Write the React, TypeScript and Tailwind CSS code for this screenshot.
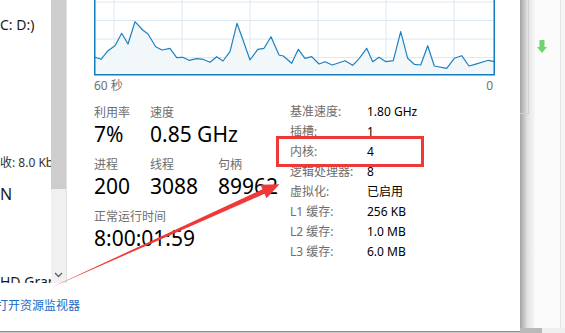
const points: [number, number][] = [
  [0.7, 57.3], [7, 59.3], [14, 50.7], [21, 45.7], [27.7, 33.3], [34, 44], [41, 21.7], [48.7, 30],
  [54, 34], [61.7, 46.7], [68, 50], [76, 48.3], [82.7, 57.7], [88.7, 57.3], [95, 60.3], [102.7, 58.7],
  [109, 59.3], [116, 62.3], [122.7, 56.7], [129, 61], [136, 51.7], [143, 23.3], [149, 40], [156, 60],
  [163.7, 49.3], [170, 48.3], [177, 36.7], [185, 55], [189.3, 56], [197.7, 63.3], [204.3, 49.3],
  [211, 58.3], [217.7, 56.7], [225, 64], [231, 61.7], [238.3, 65], [251, 60.7], [258.7, 65.3],
  [265.3, 58.3], [272.7, 48.3], [278.7, 61.7], [285, 57.3], [292, 61.7], [299.3, 60.7], [306.7, 31.7],
  [313.7, 58.3], [320.3, 64.3], [326.7, 65], [333.7, 45.7], [340.3, 66], [352.7, 68.3], [360.3, 58.3],
  [367.7, 55.7], [375, 66], [381, 64.3], [394.3, 60.3], [400.5, 61.7],
];

function CpuChart() {
  const line = points.map(([x, y]) => `${x},${y}`).join(' ');
  const area = `0.7,75 ${line} 400.5,75`;
  return (
    <svg width="401" height="76" viewBox="0 0 401 76" className="block">
      {[2, 20.5, 39, 57.5].map((y) => (
        <line key={y} x1="0" x2="401" y1={y} y2={y} stroke="#d9eaf5" strokeWidth="1" />
      ))}
      {[20, 88, 156, 224, 292, 360].map((x) => (
        <line key={x} x1={x} x2={x} y1="0" y2="75" stroke="#d9eaf5" strokeWidth="1" />
      ))}
      <polygon points={area} fill="#f1f6fa" fillOpacity="0.9" />
      <polyline points={line} fill="none" stroke="#1f80c0" strokeWidth="1.2" strokeLinejoin="round" />
      <path d="M0.75 0 V74.75 H400.25 V0" fill="none" stroke="#117dbb" strokeWidth="1.5" />
    </svg>
  );
}

function Stat({ label, value, width }: { label: string; value: string; width?: string }) {
  return (
    <div className={width}>
      <div className="h-4 text-[12px] leading-4 text-[#6d6d6d] whitespace-nowrap">{label}</div>
      <div className="h-[26px] text-[21px] leading-[26px] text-black whitespace-nowrap">{value}</div>
    </div>
  );
}

const details: [string, string][] = [
  ['基准速度:', '1.80 GHz'],
  ['插槽:', '1'],
  ['内核:', '4'],
  ['逻辑处理器:', '8'],
  ['虚拟化:', '已启用'],
  ['L1 缓存:', '256 KB'],
  ['L2 缓存:', '1.0 MB'],
  ['L3 缓存:', '6.0 MB'],
];

export default function App() {
  return (
    <div className="relative flex h-[333px] w-[565px] overflow-hidden bg-white font-['Noto_Sans','Noto_Sans_CJK_SC',sans-serif]">
      {/* left + main panel */}
      <div className="flex w-[520px] flex-col">
        <div className="flex h-[283px]">
          {/* sidebar list, clipped */}
          <div className="flex w-[51px] flex-col overflow-hidden pt-[15px] text-[#1a1a1a] whitespace-nowrap">
            <div className="h-5 text-[14px] leading-5">C: D:)</div>
            <div className="mt-[120px] h-4 text-[12px] leading-4 text-[#333]">收: 8.0 Kbps</div>
            <div className="mt-[13px] h-5 text-[16px] leading-5">N</div>
            <div className="mt-[68px] h-5 text-[14px] leading-5">HD Graphics</div>
          </div>

          {/* scrollbar */}
          <div className="flex w-[16px] flex-col border-r border-[#e2e2e2] bg-[#f0f0f0]">
            <div className="h-[189px] bg-[#cdcdcd]" />
            <div className="flex flex-1 items-end justify-center pb-[5px]">
              <svg width="9" height="6" viewBox="0 0 9 6">
                <path d="M1 1l3.5 3.5L8 1" fill="none" stroke="#606060" strokeWidth="1.3" />
              </svg>
            </div>
          </div>

          {/* performance panel */}
          <div className="flex flex-1 flex-col pl-[27px] pr-[25px]">
            <CpuChart />
            <div className="mt-[2px] flex h-4 justify-between text-[12px] leading-4 text-[#707070]">
              <span>60 秒</span>
              <span className="pr-[2px]">0</span>
            </div>

            <div className="mt-[8px] flex">
              <div className="flex w-[196px] flex-col gap-[10px] pt-[3px]">
                <div className="flex">
                  <Stat label="利用率" value="7%" width="w-[56px]" />
                  <Stat label="速度" value="0.85 GHz" />
                </div>
                <div className="flex">
                  <Stat label="进程" value="200" width="w-[56px]" />
                  <Stat label="线程" value="3088" width="w-[68px]" />
                  <Stat label="句柄" value="89962" />
                </div>
                <Stat label="正常运行时间" value="8:00:01:59" />
              </div>

              <div className="grid grid-cols-[77px_auto] text-[12px] leading-5">
                {details.map(([k, v]) => (
                  <div key={k} className="contents">
                    <span className="text-[#6d6d6d] whitespace-nowrap">{k}</span>
                    <span className="text-black whitespace-nowrap">{v}</span>
                  </div>
                ))}
              </div>
            </div>
          </div>
        </div>

        {/* footer link */}
        <div className="flex-1 pt-[15px]">
          <span className="ml-[-4px] block text-[12px] leading-4 text-[#1a6cc4] whitespace-nowrap">打开资源监视器</span>
        </div>
        <div className="h-[1px] bg-[#8e8e8e]" />
        <div className="h-[1px] bg-[#c4c4c4]" />
      </div>

      {/* window behind, on the right */}
      <div className="flex w-[45px] flex-col">
        <div className="flex flex-1">
          <div className="w-[15px] bg-linear-to-r from-[#a4a4a4] via-[#e2e2e2] to-[#f7f7f7]">
            <div className="h-[114px] w-[9px] border-b border-r border-[#cfcfcf]" />
          </div>
          <div className="w-[25px] bg-[#fbfbfb] pl-[2px] pt-[40px]">
            <svg width="10" height="13" viewBox="0 0 10 13">
              <path d="M2.5 0h5v7H10l-5 6-5-6h2.5z" fill="#6ed66e" />
            </svg>
          </div>
          <div className="w-[1px] bg-[#e4e4e4]" />
          <div className="w-[4px] bg-[#f5f5f5]" />
        </div>
        <div className="flex h-[5px]">
          <div className="w-[22px] bg-[#b9b9b9]" />
          <div className="flex-1 bg-[#efefef]" />
        </div>
      </div>

      {/* annotations */}
      <div className="absolute left-[276px] top-[136px] h-[31px] w-[148px] border-[3px] border-[#ef3838]" />
      <svg className="pointer-events-none absolute left-0 top-0" width="565" height="333" viewBox="0 0 565 333">
        <polygon
          points="50,288 262.5,189.2 260.4,184.7 279.5,184.3 266.6,198.3 264.5,193.8"
          fill="#ef3838"
        />
      </svg>
    </div>
  );
}
